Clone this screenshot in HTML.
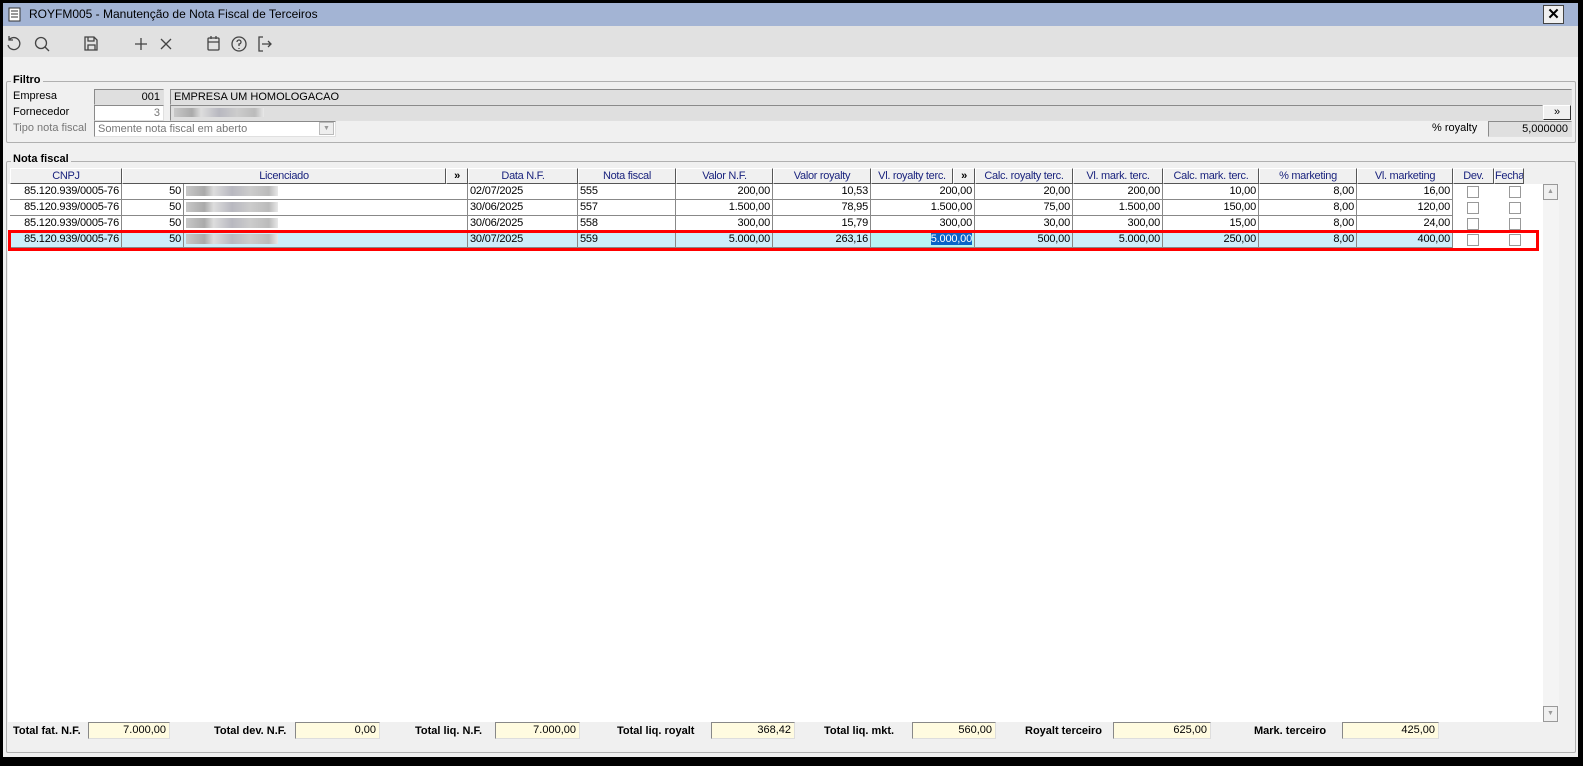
<!DOCTYPE html>
<html><head><meta charset="utf-8"><style>
*{box-sizing:border-box;margin:0;padding:0}
body{width:1583px;height:766px;background:#000;font-family:"Liberation Sans",Arial,sans-serif;font-size:11px;color:#000;position:relative;overflow:hidden}
.a{position:absolute}
.win{left:3px;top:3px;width:1575px;height:754px;background:#f0f0f0}
.title{left:3px;top:3px;width:1575px;height:23px;background:#a3b4d4;font-size:12px;line-height:23px;padding-left:26px}
.tb{left:3px;top:26px;width:1575px;height:31px;background:#e1e1e1}
.grp{border:1px solid #b0b0b0;border-radius:2px}
.gl{background:#f0f0f0;font-weight:bold;padding:0 2px;font-size:11px}
.box{border:1px solid #8a8a8a;border-right-color:#e0e0e0;border-bottom-color:#e0e0e0;height:16px;line-height:14px;padding:0 3px;white-space:nowrap;overflow:hidden}
.hd{top:168px;height:16px;background:#f0f0f0;border:1px solid #fff;border-right:1px solid #555;border-bottom:1px solid #555;color:#1a237e;text-align:center;line-height:14px;font-size:11px;letter-spacing:-0.3px;white-space:nowrap;overflow:hidden}
.c{height:16px;background:#fff;border-right:1px solid #888;border-bottom:1px solid #888;line-height:15px;padding:0 2px;white-space:nowrap;overflow:hidden;letter-spacing:-0.2px}
.r{text-align:right}
.sel{background:#cdeefa}
.cb{width:12px;height:12px;border:1px solid #999;background:#fff}
.fl{font-weight:bold;top:723px;line-height:16px}
.fb{top:722px;height:17px;background:#fffbe0;border:1px solid #888;border-right-color:#ddd;border-bottom-color:#ddd;text-align:right;padding-right:3px;line-height:15px}
.blur{height:12px;background:linear-gradient(90deg,#c8c8c8,#aaa 20%,#ddd 30%,#b8b8c0 50%,#ccc 70%,#bbb 90%,#e8e8e8)}
</style></head><body>
<div class="a win"></div>
<div class="a title">ROYFM005 - Manutenção de Nota Fiscal de Terceiros</div>
<svg class="a" style="left:8px;top:7px" width="13" height="15"><rect x="1" y="1" width="11" height="13" fill="#fff" stroke="#333"/><path d="M3 4h7M3 7h7M3 10h7" stroke="#333"/></svg>
<div class="a" style="left:1543px;top:5px;width:21px;height:19px;background:#f0f0f0;border:1px solid #444;font-weight:bold;font-size:15px;text-align:center;line-height:17px">✕</div>
<div class="a tb"></div>
<svg class="a" style="left:5px;top:34px" width="270" height="20" fill="none" stroke="#444" stroke-width="1.3">
<path d="M4 6 A6 6 0 1 1 3 11 M4 2v4h4"/>
<circle cx="36" cy="9" r="5.5"/><path d="M40 13l4 4"/>
<path d="M80 3h9l3 3v10H80z M83 3v4h6V3 M83 16v-5h7v5"/>
<path d="M136 4v12M130 10h12"/>
<path d="M156 5l10 10M166 5l-10 10"/>
<rect x="203" y="4" width="11" height="12" rx="1"/><path d="M203 8h11M206 2v3M211 2v3"/>
<circle cx="234" cy="10" r="7"/><path d="M232 8a2 2 0 1 1 2 2v2M234 14v1"/>
<path d="M258 3h-4v14h4M257 10h9M263 7l3 3-3 3"/>
</svg>
<!-- Filtro -->
<div class="a grp" style="left:6px;top:81px;width:1570px;height:62px"></div>
<div class="a gl" style="left:11px;top:74px">Filtro</div>
<div class="a" style="left:13px;top:90px">Empresa</div>
<div class="a box r" style="left:94px;top:89px;width:70px;background:#dfdfdf">001</div>
<div class="a box" style="left:170px;top:89px;width:1402px;background:#dfdfdf">EMPRESA UM HOMOLOGACAO</div>
<div class="a" style="left:13px;top:106px">Fornecedor</div>
<div class="a box r" style="left:94px;top:105px;width:70px;background:#fff;color:#777">3</div>
<div class="a box" style="left:170px;top:105px;width:1373px;background:#dfdfdf;padding-top:2px"><div class="blur" style="width:90px;height:9px"></div></div>
<div class="a" style="left:1543px;top:105px;width:28px;height:15px;background:#f0f0f0;border:1px solid #fff;border-right-color:#333;border-bottom-color:#333;text-align:center;line-height:12px">»</div>
<div class="a" style="left:13px;top:122px;color:#777">Tipo nota fiscal</div>
<div class="a box" style="left:94px;top:121px;width:242px;background:#fff;color:#777">Somente nota fiscal em aberto</div>
<div class="a" style="left:319px;top:122px;width:15px;height:13px;border:1px solid #bbb;background:#eee;color:#999;font-size:7px;text-align:center;line-height:12px">▼</div>
<div class="a" style="left:1432px;top:122px">% royalty</div>
<div class="a box r" style="left:1488px;top:121px;width:84px;background:#dfdfdf">5,000000</div>
<!-- Nota fiscal -->
<div class="a grp" style="left:6px;top:161px;width:1570px;height:592px"></div>
<div class="a" style="left:8px;top:184px;width:1535px;height:538px;background:#fff"></div>
<div class="a" style="left:1543px;top:184px;width:16px;height:538px;background:#f4f4f4"></div>
<div class="a" style="left:1543px;top:184px;width:15px;height:16px;border:1px solid #999;background:#f0f0f0;color:#999;font-size:7px;text-align:center;line-height:14px">▲</div>
<div class="a" style="left:1543px;top:706px;width:15px;height:16px;border:1px solid #999;background:#f0f0f0;color:#999;font-size:7px;text-align:center;line-height:14px">▼</div>
<div class="a gl" style="left:11px;top:153px">Nota fiscal</div>
<div class="a hd" style="left:10px;width:112px">CNPJ</div>
<div class="a hd" style="left:122px;width:324px">Licenciado</div>
<div class="a hd" style="left:446px;width:22px;color:#000;font-weight:bold">»</div>
<div class="a hd" style="left:468px;width:110px">Data N.F.</div>
<div class="a hd" style="left:578px;width:98px">Nota fiscal</div>
<div class="a hd" style="left:676px;width:97px">Valor N.F.</div>
<div class="a hd" style="left:773px;width:98px">Valor royalty</div>
<div class="a hd" style="left:871px;width:82px">Vl. royalty terc.</div>
<div class="a hd" style="left:953px;width:22px;color:#000;font-weight:bold">»</div>
<div class="a hd" style="left:975px;width:98px">Calc. royalty terc.</div>
<div class="a hd" style="left:1073px;width:90px">Vl. mark. terc.</div>
<div class="a hd" style="left:1163px;width:96px">Calc. mark. terc.</div>
<div class="a hd" style="left:1259px;width:98px">% marketing</div>
<div class="a hd" style="left:1357px;width:96px">Vl. marketing</div>
<div class="a hd" style="left:1453px;width:41px">Dev.</div>
<div class="a hd" style="left:1494px;width:30px">Fecha.</div>
<div id="rows"></div>
<script>
var d=[["02/07/2025","555","200,00","10,53","200,00","20,00","200,00","10,00","8,00","16,00"],
["30/06/2025","557","1.500,00","78,95","1.500,00","75,00","1.500,00","150,00","8,00","120,00"],
["30/06/2025","558","300,00","15,79","300,00","30,00","300,00","15,00","8,00","24,00"],
["30/07/2025","559","5.000,00","263,16","5.000,00","500,00","5.000,00","250,00","8,00","400,00"]];
var cols=[[468,110,0],[578,98,0],[676,97,1],[773,98,1],[871,104,1],[975,98,1],[1073,90,1],[1163,96,1],[1259,98,1],[1357,96,1]];
var h="";
d.forEach(function(r,i){var y=184+i*16,s=i==3?" sel":"";
h+='<div class="a c r'+s+'" style="left:10px;top:'+y+'px;width:112px">85.120.939/0005-76</div>';
h+='<div class="a c r'+s+'" style="left:122px;top:'+y+'px;width:62px">50</div>';
h+='<div class="a c'+s+'" style="left:184px;top:'+y+'px;width:284px;padding-top:2px"><div class="blur" style="width:92px;height:10px"></div></div>';
cols.forEach(function(c,j){var v=r[j],st=s;
if(i==3&&j==4){v='<span style="background:#0a64c8;color:#fff">5.000,00</span>';st=" sel";}
h+='<div class="a c'+(c[2]?' r':'')+st+'" style="left:'+c[0]+'px;top:'+y+'px;width:'+c[1]+'px'+(i==3&&j==4?';background:#b8f4f4':'')+'">'+v+'</div>';});
h+='<div class="a cb" style="left:1467px;top:'+(y+2)+'px"></div><div class="a cb" style="left:1509px;top:'+(y+2)+'px"></div>';
});
h+='<div class="a" style="left:8px;top:230px;width:1531px;height:21px;border:3px solid #f00"></div>';
document.getElementById("rows").innerHTML=h;
</script>
<div class="a fl" style="left:13px">Total fat. N.F.</div><div class="a fb" style="left:88px;width:82px">7.000,00</div>
<div class="a fl" style="left:214px">Total dev. N.F.</div><div class="a fb" style="left:295px;width:85px">0,00</div>
<div class="a fl" style="left:415px">Total liq. N.F.</div><div class="a fb" style="left:495px;width:85px">7.000,00</div>
<div class="a fl" style="left:617px">Total liq. royalt</div><div class="a fb" style="left:711px;width:84px">368,42</div>
<div class="a fl" style="left:824px">Total liq. mkt.</div><div class="a fb" style="left:912px;width:84px">560,00</div>
<div class="a fl" style="left:1025px">Royalt terceiro</div><div class="a fb" style="left:1113px;width:98px">625,00</div>
<div class="a fl" style="left:1254px">Mark. terceiro</div><div class="a fb" style="left:1342px;width:97px">425,00</div>
</body></html>
